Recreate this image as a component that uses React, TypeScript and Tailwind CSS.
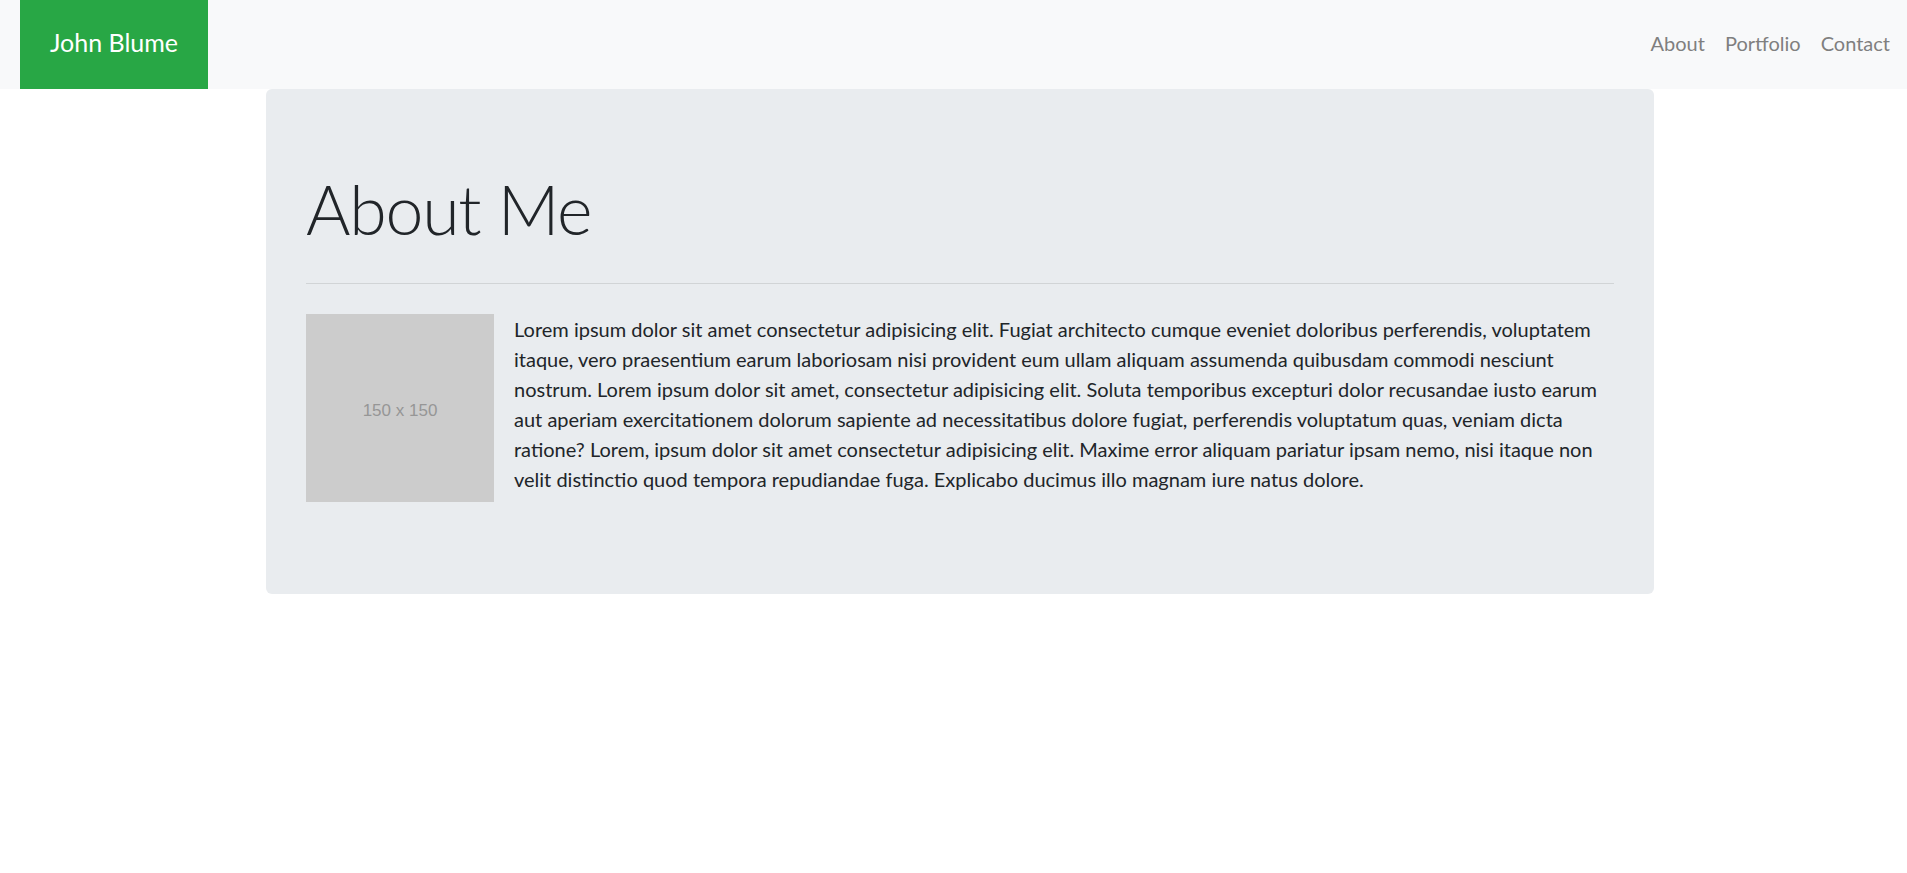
import React from "react";

const lines = [
  "Lorem ipsum dolor sit amet consectetur adipisicing elit. Fugiat architecto cumque eveniet doloribus perferendis, voluptatem",
  "itaque, vero praesentium earum laboriosam nisi provident eum ullam aliquam assumenda quibusdam commodi nesciunt",
  "nostrum. Lorem ipsum dolor sit amet, consectetur adipisicing elit. Soluta temporibus excepturi dolor recusandae iusto earum",
  "aut aperiam exercitationem dolorum sapiente ad necessitatibus dolore fugiat, perferendis voluptatum quas, veniam dicta",
  "ratione? Lorem, ipsum dolor sit amet consectetur adipisicing elit. Maxime error aliquam pariatur ipsam nemo, nisi itaque non",
  "velit distinctio quod tempora repudiandae fuga. Explicabo ducimus illo magnam iure natus dolore.",
];

export default function App() {
  return (
    <div className="min-h-[873px] bg-white font-['Lato',sans-serif] text-[#212529]">
      <nav className="flex h-[89px] items-stretch justify-between bg-[#f8f9fa] pl-[20px] pr-[7px]">
        <a className="flex w-[188px] items-center justify-center bg-[#28a745] pb-[4px] text-[25px] text-white">
          John Blume
        </a>
        <ul className="flex items-center pb-[4px] text-[20px] text-[#7f7f7f]">
          <li className="px-[10px]">About</li>
          <li className="px-[10px]">Portfolio</li>
          <li className="px-[10px]">Contact</li>
        </ul>
      </nav>
      <div className="ml-[266px] w-[1388px] rounded-[6px] bg-[#e9ecef] px-[40px] pt-[80px] pb-[80px]">
        <h1 className="h-[84px] text-[68px] font-light leading-[80px] tracking-[-1.2px]">About Me</h1>
        <hr className="mt-[30px] mb-[30px] border-t border-[rgba(0,0,0,0.1)]" />
        <div className="flex items-start">
          <div className="mr-[20px] flex h-[188px] w-[188px] shrink-0 items-center justify-center bg-[#cccccc] pt-[5px] font-['Liberation_Sans',sans-serif] text-[17px] text-[#969696]">
            150 x 150
          </div>
          <p className="mb-[20px] text-[20px] leading-[30px]">
            {lines.map((l, i) => (
              <span key={i} className="block whitespace-nowrap">
                {l}
              </span>
            ))}
          </p>
        </div>
      </div>
    </div>
  );
}
